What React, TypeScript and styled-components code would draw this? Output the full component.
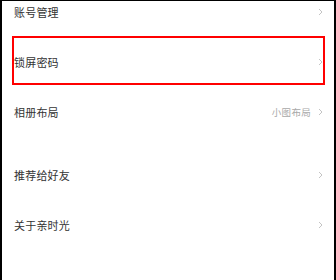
import React from "react";
import styled, { createGlobalStyle } from "styled-components";

const Global = createGlobalStyle`
  html, body { margin: 0; padding: 0; background: #fff; }
  body { width: 336px; height: 280px; overflow: hidden; }
`;

const Screen = styled.div`
  box-sizing: border-box;
  width: 336px;
  height: 280px;
  overflow: hidden;
  background: #ffffff;
  border-left: 2px solid #000;
  border-right: 2px solid #000;
  border-top: 1px solid #000;
  font-family: "Noto Sans CJK SC", "Noto Sans", sans-serif;
`;

const List = styled.div`
  display: flex;
  flex-direction: column;
  margin-top: -14px;
`;

const Group = styled.div<{ $gap?: number }>`
  display: flex;
  flex-direction: column;
  margin-top: ${(p) => p.$gap ?? 0}px;
`;

const Row = styled.div`
  position: relative;
  box-sizing: border-box;
  height: 50px;
  display: flex;
  align-items: center;
  justify-content: space-between;
  padding: 0 11px 0 12px;
`;

const Label = styled.span`
  font-size: 11px;
  color: #333333;
  letter-spacing: 0.2px;
`;

const Right = styled.div`
  display: flex;
  align-items: center;
  gap: 7px;
`;

const Value = styled.span`
  font-size: 9.5px;
  color: #a8a8a8;
  letter-spacing: 0.3px;
`;

const Highlight = styled.div`
  position: absolute;
  left: 10px;
  right: 9px;
  top: -1px;
  bottom: 2px;
  border: 2px solid #ff0000;
  pointer-events: none;
`;

const Chevron = () => (
  <svg width="5" height="8" viewBox="0 0 5 8">
    <path d="M1 1 L4 4 L1 7" fill="none" stroke="#c4c4c4" strokeWidth="1" />
  </svg>
);

type Item = { label: string; value?: string; highlight?: boolean };

const groupA: Item[] = [
  { label: "账号管理" },
  { label: "锁屏密码", highlight: true },
  { label: "相册布局", value: "小图布局" },
];
const groupB: Item[] = [{ label: "推荐给好友" }, { label: "关于亲时光" }];

const renderRow = (it: Item) => (
  <Row key={it.label}>
    <Label>{it.label}</Label>
    <Right>
      {it.value && <Value>{it.value}</Value>}
      <Chevron />
    </Right>
    {it.highlight && <Highlight />}
  </Row>
);

export default function App() {
  return (
    <>
      <Global />
      <Screen>
        <List>
          <Group>{groupA.map(renderRow)}</Group>
          <Group $gap={13}>{groupB.map(renderRow)}</Group>
        </List>
      </Screen>
    </>
  );
}
